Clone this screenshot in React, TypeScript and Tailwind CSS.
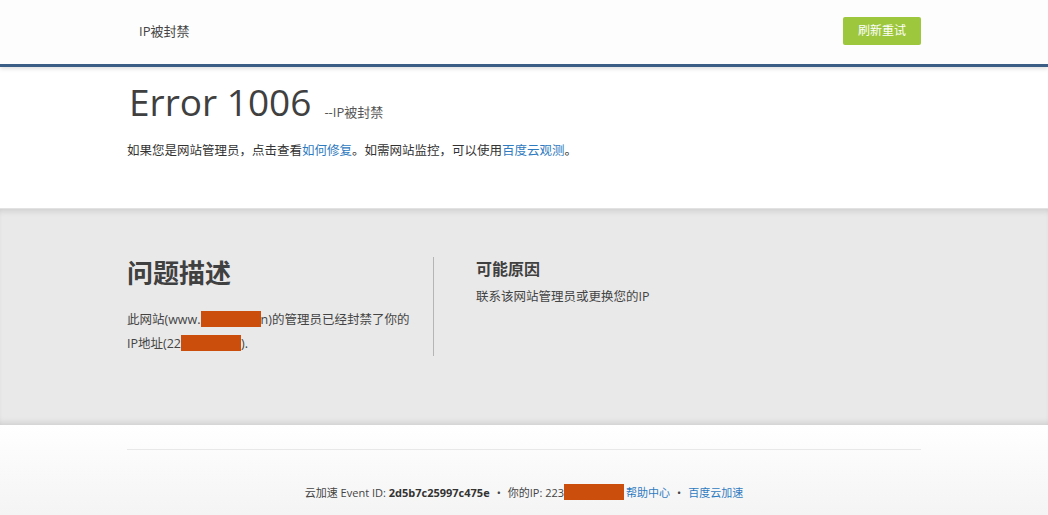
import React from 'react';

const font = { fontFamily: '"Open Sans", "Noto Sans CJK SC", sans-serif' };

function Redact({ w }: { w: number }) {
    return <span className="inline-block h-[16px] align-[-3px] bg-[#cc4e0c]" style={{ width: w }} />;
}

export default function App() {
    return (
        <div className="w-[1048px] h-[515px] overflow-hidden bg-white text-[#333]" style={font}>
            {/* header */}
            <div className="h-[67px] bg-[#fdfdfd] border-b-[3px] border-[#3b5e86] shadow-[0_2px_4px_rgba(0,0,0,0.12)] relative z-10">
                <div className="w-[794px] mx-auto h-full flex items-center justify-between">
                    <span className="pl-[12px] text-[13px] text-[#444]">IP被封禁</span>
                    <button className="w-[78px] h-[28px] mb-[2px] bg-[#9dc73d] rounded-[2px] text-white text-[12px]">刷新重试</button>
                </div>
            </div>

            {/* title */}
            <div className="h-[141px] bg-white">
                <div className="w-[794px] mx-auto pt-[12px] pl-[2px]">
                    <div className="flex items-end">
                        <h1 className="text-[37px] leading-[46px] text-[#404040] font-normal">Error 1006</h1>
                        <span className="ml-[13px] mb-[3px] text-[13px] text-[#555]">--IP被封禁</span>
                    </div>
                    <p className="mt-[17px] -ml-[2px] text-[12.5px] text-[#333]">
                        如果您是网站管理员，点击查看<a className="text-[#2f7bc0]">如何修复</a>。如需网站监控，可以使用<a className="text-[#2f7bc0]">百度云观测</a>。
                    </p>
                </div>
            </div>

            {/* gray band */}
            <div className="h-[217px] bg-[#e9e9e9] shadow-[inset_0_6px_6px_-4px_rgba(0,0,0,0.12),inset_0_-6px_6px_-4px_rgba(0,0,0,0.12)] border-t border-[#e2e2e2]">
                <div className="w-[794px] mx-auto pt-[48px] flex">
                    <div className="w-[307px] border-r border-[#b5b5b5] h-[99px]">
                        <h2 className="text-[26px] leading-[34px] font-bold text-[#404040] -mt-[1px]">问题描述</h2>
                        <p className="mt-[18px] text-[12.5px] leading-[24px] text-[#444]">
                            此网站(www.<Redact w={60} />n)的管理员已经封禁了你的
                            <br />
                            IP地址(22<Redact w={60} />).
                        </p>
                    </div>
                    <div className="pl-[42px]">
                        <h3 className="text-[16px] leading-[24px] font-bold text-[#404040]">可能原因</h3>
                        <p className="mt-[6px] text-[12.5px] leading-[20px] text-[#444]">联系该网站管理员或更换您的IP</p>
                    </div>
                </div>
            </div>

            {/* footer */}
            <div className="h-[90px] bg-gradient-to-b from-white to-[#f4f4f4]">
                <div className="w-[794px] mx-auto pt-[24px]">
                    <div className="border-t border-[#e8e8e8]" />
                    <div className="mt-[34px] text-center text-[11px] text-[#444]">
                        云加速 Event ID: <span className="font-bold text-[#333]">2d5b7c25997c475e</span>
                        <span className="mx-[7px]">•</span>
                        你的IP: 223<Redact w={60} />
                        <a className="text-[#2f7bc0] ml-[2px]">帮助中心</a>
                        <span className="mx-[7px]">•</span>
                        <a className="text-[#2f7bc0]">百度云加速</a>
                    </div>
                </div>
            </div>
        </div>
    );
}
